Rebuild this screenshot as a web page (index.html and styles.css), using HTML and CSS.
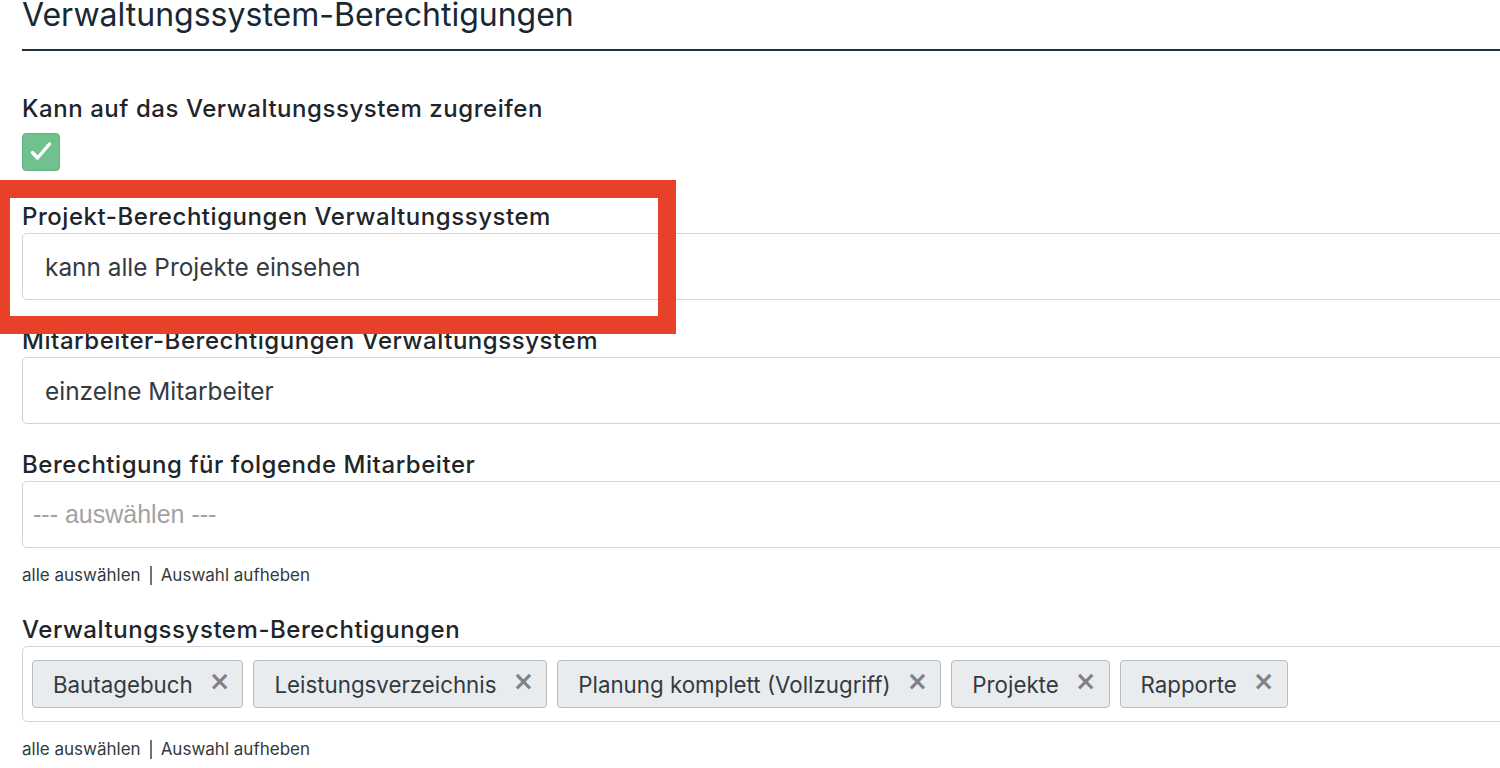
FILE: index.html
```html
<!DOCTYPE html>
<html lang="de">
<head>
<meta charset="utf-8">
<title>Verwaltungssystem-Berechtigungen</title>
<link rel="stylesheet" href="styles.css">
</head>
<body>
<div class="page">
  <h2 class="title">Verwaltungssystem-Berechtigungen</h2>

  <div class="field field-check">
    <div class="label">Kann auf das Verwaltungssystem zugreifen</div>
    <div class="checkbox">
      <svg viewBox="0 0 38 38" width="38" height="38"><path d="M10.5 19.5l5 5.5L27.5 11" fill="none" stroke="#fff" stroke-width="3.4" stroke-linecap="round" stroke-linejoin="round"/></svg>
    </div>
  </div>

  <div class="field">
    <div class="label">Projekt-Berechtigungen Verwaltungssystem</div>
    <div class="input">kann alle Projekte einsehen</div>
  </div>

  <div class="field">
    <div class="label">Mitarbeiter-Berechtigungen Verwaltungssystem</div>
    <div class="input">einzelne Mitarbeiter</div>
  </div>

  <div class="field field-multi">
    <div class="label">Berechtigung für folgende Mitarbeiter</div>
    <div class="input placeholder">--- auswählen ---</div>
    <div class="links"><span>alle auswählen</span><span class="sep"></span><span>Auswahl aufheben</span></div>
  </div>

  <div class="field field-multi">
    <div class="label">Verwaltungssystem-Berechtigungen</div>
    <div class="input tags">
      <span class="tag">Bautagebuch<span class="x">×</span></span>
      <span class="tag">Leistungsverzeichnis<span class="x">×</span></span>
      <span class="tag">Planung komplett (Vollzugriff)<span class="x">×</span></span>
      <span class="tag">Projekte<span class="x">×</span></span>
      <span class="tag">Rapporte<span class="x">×</span></span>
    </div>
    <div class="links"><span>alle auswählen</span><span class="sep"></span><span>Auswahl aufheben</span></div>
  </div>

  <div class="highlight"></div>
</div>
</body>
</html>
```

FILE: styles.css
```css
html, body {
  margin: 0;
  padding: 0;
  background: #fff;
  overflow: hidden;
}
body {
  width: 1500px;
  height: 768px;
  font-family: Inter, Roboto, "Liberation Sans", Arial, sans-serif;
  color: #212529;
}
.page {
  position: relative;
  width: 1560px;
  padding-left: 22px;
}
.title {
  margin: 0;
  font-size: 32px;
  line-height: 30px;
  font-weight: 400;
  color: #172833;
  padding-bottom: 19px;
  border-bottom: 2px solid #1d3340;
  white-space: nowrap;
}
.field {
  margin-bottom: 29px;
}
.field-check {
  margin-top: 46px;
  margin-bottom: 34px;
}
.label {
  font-size: 24px;
  line-height: 24px;
  letter-spacing: 0.55px;
  font-weight: 500;
  color: #212529;
  margin-bottom: 4px;
  white-space: nowrap;
}
.field-check .label {
  margin-bottom: 12px;
}
.checkbox {
  box-sizing: border-box;
  width: 38px;
  height: 38px;
  border: 1px solid #64b483;
  background: #70c18e;
  border-radius: 4px;
  display: flex;
  align-items: center;
  justify-content: center;
  overflow: hidden;
}
.checkbox svg {
  flex: none;
}
.input {
  box-sizing: border-box;
  height: 67px;
  border: 1px solid #ced4da;
  border-radius: 5px;
  padding: 0 22px;
  display: flex;
  align-items: center;
  font-size: 24.4px;
  color: #343a40;
}
.placeholder {
  font-family: "Liberation Sans", Arial, sans-serif;
  color: #a2a2a2;
  font-size: 25px;
  padding-left: 10px;
}
.field-multi {
  margin-bottom: 33px;
}
.links {
  margin-top: 17px;
  font-size: 17px;
  line-height: 20px;
  color: #343a40;
  display: flex;
  align-items: center;
}
.sep {
  display: inline-block;
  width: 2px;
  height: 19px;
  background: #6c757d;
  margin: 0 9px;
}
.tags {
  height: 76px;
  padding: 0 9px;
  gap: 10px;
}
.tag {
  box-sizing: border-box;
  height: 48px;
  display: inline-flex;
  align-items: center;
  padding: 0 12px 0 20px;
  background: #e9ecef;
  border: 1px solid #b7bcc1;
  border-radius: 4px;
  font-size: 22.3px;
  color: #343a40;
}
.x {
  margin-left: 16px;
  font-family: "DejaVu Sans", sans-serif;
  font-weight: 700;
  font-size: 26px;
  color: #7d8287;
  position: relative;
  top: -3px;
}
.highlight {
  position: absolute;
  left: -8px;
  top: 180px;
  width: 684px;
  height: 154px;
  box-sizing: border-box;
  border: 18px solid #e84129;
  pointer-events: none;
}
```
